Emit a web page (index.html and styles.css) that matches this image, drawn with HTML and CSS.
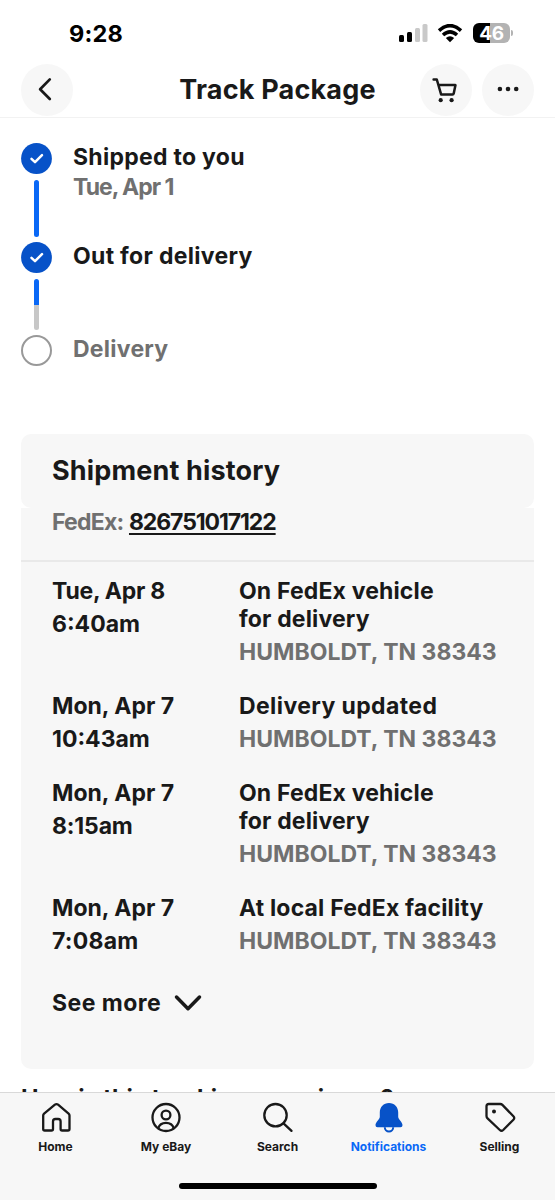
FILE: index.html
```html
<!DOCTYPE html>
<html lang="en">
<head>
<meta charset="utf-8">
<title>Track Package</title>
<link rel="stylesheet" href="styles.css">
</head>
<body>
<div class="screen">
  <div class="status">
    <span class="clock">9:28</span>
    <div class="indicators">
      <svg class="signal" width="29" height="19" viewBox="0 0 29 19">
        <rect x="0" y="11" width="5" height="7" rx="1.5" fill="#000"/>
        <rect x="8" y="8" width="5" height="10" rx="1.5" fill="#000"/>
        <rect x="16" y="4" width="5" height="14" rx="1.5" fill="#c9c9c9"/>
        <rect x="23.5" y="0" width="5" height="18" rx="1.5" fill="#c9c9c9"/>
      </svg>
      <svg class="wifi" width="26" height="19" viewBox="0 0 26 19">
        <path d="M2 6.600Q13-3.400 24 6.600M6 11Q13 4.600 20 11" fill="none" stroke="#000" stroke-width="3.500"/>
        <path d="M8.800 14Q13 10.300 17.200 14L13 18.300Z" fill="#000"/>
      </svg>
      <div class="battery"><span>46</span></div>
      <i class="battery-tip"></i>
    </div>
  </div>

  <header class="header">
    <button class="round" aria-label="Back">
      <svg width="52" height="52" viewBox="0 0 52 52" fill="none" stroke="#191919" stroke-width="2.700" stroke-linecap="round" stroke-linejoin="round"><path d="M28.800 15.400 19.100 25.200l9.700 9.800"/></svg>
    </button>
    <h1>Track Package</h1>
    <div class="actions">
      <button class="round" aria-label="Cart">
        <svg width="52" height="52" viewBox="0 0 52 52" fill="none" stroke="#191919" stroke-width="2.500" stroke-linecap="round" stroke-linejoin="round"><path d="M13.600 15.500h3.200l4.300 14.900h11.400q1 0 1.200-1l1.800-8.300H18.600"/><circle cx="20.700" cy="36.200" r="2.100" fill="#191919" stroke="none"/><circle cx="31.600" cy="36.200" r="2.100" fill="#191919" stroke="none"/></svg>
      </button>
      <button class="round" aria-label="More">
        <svg width="52" height="52" viewBox="0 0 52 52" fill="#191919"><circle cx="17.900" cy="25" r="2.300"/><circle cx="26" cy="25" r="2.300"/><circle cx="34.200" cy="25" r="2.300"/></svg>
      </button>
    </div>
  </header>

  <main class="content">
    <section class="steps">
      <div class="step">
        <div class="rail">
          <svg width="31" height="31" viewBox="0 0 31 31"><circle cx="15.500" cy="15.500" r="15.400" fill="#0752c8"/><path d="m10.500 15.800 3.500 3.300 7-6.900" fill="none" stroke="#fff" stroke-width="2.500" stroke-linecap="round" stroke-linejoin="round"/></svg>
          <i class="bar"></i>
        </div>
        <div class="step-text"><p class="shipped">Shipped to you</p><p class="muted shipdate">Tue, Apr 1</p></div>
      </div>
      <div class="step">
        <div class="rail">
          <svg width="31" height="31" viewBox="0 0 31 31"><circle cx="15.500" cy="15.500" r="15.400" fill="#0752c8"/><path d="m10.500 15.800 3.500 3.300 7-6.900" fill="none" stroke="#fff" stroke-width="2.500" stroke-linecap="round" stroke-linejoin="round"/></svg>
          <i class="bar half"></i>
        </div>
        <div class="step-text"><p class="out">Out for delivery</p></div>
      </div>
      <div class="step">
        <div class="rail"><i class="empty"></i></div>
        <div class="step-text"><p class="muted pending">Delivery</p></div>
      </div>
    </section>

    <section class="history">
      <div class="history-title"><h2>Shipment history</h2></div>
      <div class="history-body">
        <div class="carrier"><span class="muted fedex">FedEx:</span> <a class="number">826751017122</a></div>
        <div class="events">
          <div class="event">
            <div class="when"><p class="tuesday">Tue, Apr 8</p><p>6:40am</p></div>
            <div class="what"><p class="vehicle">On FedEx vehicle<br>for delivery</p><p class="muted place">HUMBOLDT, TN 38343</p></div>
          </div>
          <div class="event">
            <div class="when"><p>Mon, Apr 7</p><p>10:43am</p></div>
            <div class="what"><p class="updated">Delivery updated</p><p class="muted place">HUMBOLDT, TN 38343</p></div>
          </div>
          <div class="event">
            <div class="when"><p>Mon, Apr 7</p><p class="short">8:15am</p></div>
            <div class="what"><p class="vehicle">On FedEx vehicle<br>for delivery</p><p class="muted place">HUMBOLDT, TN 38343</p></div>
          </div>
          <div class="event">
            <div class="when"><p>Mon, Apr 7</p><p class="time">7:08am</p></div>
            <div class="what"><p class="facility">At local FedEx facility</p><p class="muted place">HUMBOLDT, TN 38343</p></div>
          </div>
        </div>
        <div class="more"><span>See more</span>
          <svg width="28" height="18" viewBox="0 0 28 18" fill="none" stroke="#191919" stroke-width="3.500" stroke-linecap="round" stroke-linejoin="round"><path d="m2.500 3 11.500 11.700L25.500 3"/></svg>
        </div>
      </div>
    </section>
    <h2 class="question">How is this tracking experience?</h2>
  </main>

  <nav class="tabs">
    <div class="tab-row">
      <a class="tab"><svg width="32" height="32" viewBox="0 0 32 32" fill="none" stroke="#191919" stroke-width="2.300" stroke-linecap="round" stroke-linejoin="round"><path d="M3.200 27V13.600q0-1.200.9-2L14.900 2.700q1.600-1.200 3.200 0l10.500 8.900q.9.800.9 2V27q0 1.500-1.500 1.500h-5.900q-1.500 0-1.500-1.500v-7.500q0-2.500-2.500-2.500h-2.600q-2.500 0-2.500 2.500V27q0 1.500-1.500 1.500H4.700q-1.500 0-1.500-1.500Z"/></svg><span>Home</span></a>
      <a class="tab"><svg width="32" height="32" viewBox="0 0 32 32" fill="none" stroke="#191919" stroke-width="2.300"><circle cx="16" cy="15.500" r="13.500"/><circle cx="16" cy="13" r="4.400"/><path d="M8.300 26.300c1-3.600 4.200-5.400 7.700-5.400s6.700 1.800 7.700 5.400"/></svg><span>My eBay</span></a>
      <a class="tab"><svg width="32" height="32" viewBox="0 0 32 32" fill="none" stroke="#191919" stroke-width="2.300" stroke-linecap="round"><circle cx="13.500" cy="13.200" r="11.200"/><path d="m21.500 21.300 8 7.600"/></svg><span>Search</span></a>
      <a class="tab active"><svg width="32" height="32" viewBox="0 0 32 32"><path d="M16 1C10.600 1 6.800 5.100 6.800 10.300v4.500c0 2.400-4.300 5.400-4.300 8.500q0 2 2 2h23q2 0 2-2c0-3.100-4.300-6.100-4.300-8.500v-4.500C25.200 5.100 21.400 1 16 1Z" fill="#0752c8"/><path d="M11.800 25.300a4.200 4.200 0 0 0 8.400 0" fill="none" stroke="#0752c8" stroke-width="2"/></svg><span>Notifications</span></a>
      <a class="tab"><svg width="32" height="32" viewBox="0 0 32 32" fill="none" stroke="#191919" stroke-width="2.300" stroke-linejoin="round"><path d="M4.800 2h11.400q1.300 0 2.200.9l11 11.400q1.700 1.700 0 3.400L19.200 28q-1.700 1.600-3.400 0l-12-11.300Q2.500 15.500 2.500 14V4.300Q2.500 2 4.800 2Z"/><circle cx="10" cy="9.400" r="2" fill="#191919" stroke="none"/></svg><span>Selling</span></a>
    </div>
    <i class="home-bar"></i>
  </nav>
</div>
</body>
</html>
```
FILE: styles.css
```css
* { box-sizing: border-box; }
body { margin: 0; background: #fff; font-family: Inter, "Liberation Sans", sans-serif; color: #191919; }
p, h1, h2 { margin: 0; }
svg { display: block; flex: none; }
.screen { width: 555px; height: 1200px; display: flex; flex-direction: column; overflow: hidden; }

.status { height: 64px; flex: none; display: flex; justify-content: space-between; padding: 19px 42px 0 69px; }
.clock { font-size: 23.5px; font-weight: 700; line-height: 29px; letter-spacing: .2px; color: #000; }
.indicators { display: flex; padding-top: 5px; }
.wifi { margin-left: 9px; }
.battery { width: 37px; height: 20px; margin: -1px 0 0 10px; border-radius: 6px; background: linear-gradient(90deg, #000 46%, #b3b3b3 46%); color: #fff; font-size: 19px; font-weight: 700; line-height: 21px; letter-spacing: -.3px; text-align: center; }
.battery-tip { width: 2px; height: 6px; margin: 6px 0 0 1px; border-radius: 0 3px 3px 0; background: #b3b3b3; }

.header { height: 54px; flex: none; display: grid; grid-template-columns: 114px 1fr 114px; padding: 0 21px; border-bottom: 1px solid #f2f2f2; }
.header h1 { padding-top: 9px; text-align: center; font-size: 27px; line-height: 33px; font-weight: 700; letter-spacing: .2px; white-space: nowrap; }
.actions { display: flex; gap: 10px; }
.round { width: 52px; height: 52px; padding: 0; border: 0; border-radius: 50%; background: #f7f7f7; }

.content { flex: 1; min-height: 0; overflow: hidden; padding: 25px 21px 0; font-size: 23px; line-height: 28px; font-weight: 650; }
.muted { color: #707070; }
.steps { height: 291px; }
.step { display: flex; gap: 21px; }
.step:nth-child(1) { height: 99px; }
.step:nth-child(2) { height: 93px; }
.rail { width: 31px; display: flex; flex-direction: column; align-items: center; gap: 6px; }
.bar { width: 5px; height: 57px; border-radius: 3px; background: #0968f6; }
.half { height: 51px; background: linear-gradient(#0968f6 51%, #c7c7c7 51%); }
.empty { width: 31px; height: 31px; border: 2.5px solid #999; border-radius: 50%; }
.step-text { display: flex; flex-direction: column; gap: 2px; }
.shipped { letter-spacing: .28px; }
.shipdate { letter-spacing: -1px; }
.out { letter-spacing: .3px; }
.pending { letter-spacing: .25px; }

.history-title { height: 74px; padding: 20px 31px 0; border-radius: 10px; background: #f7f7f7; }
.history-title h2 { font-size: 27px; line-height: 34px; font-weight: 700; letter-spacing: .15px; }
.history-body { height: 561px; border-radius: 0 0 10px 10px; background: #f7f7f7; }
.carrier { height: 54px; border-bottom: 2px solid #e9e9e9; padding: 0 31px; }
.fedex { letter-spacing: -.75px; }
.number { letter-spacing: -1.1px; text-decoration: underline; text-decoration-thickness: 2px; text-underline-offset: 3px; text-decoration-skip-ink: none; }
.events { display: flex; flex-direction: column; gap: 26px; padding: 15px 31px 0; }
.event { display: grid; grid-template-columns: 187px 1fr; white-space: nowrap; }
.when, .what { display: flex; flex-direction: column; gap: 5px; }
.tuesday { letter-spacing: -.25px; }
.time { letter-spacing: .25px; }
.short { letter-spacing: -.15px; }
.vehicle { letter-spacing: .15px; }
.updated { letter-spacing: .4px; }
.facility { letter-spacing: .18px; }
.more { display: flex; gap: 13px; align-items: center; padding: 34px 31px 0; letter-spacing: .45px; }
.question { margin-top: 15px; font-size: 23.5px; line-height: 28px; font-weight: 700; white-space: nowrap; }

.tabs { height: 108px; flex: none; border-top: 1px solid #d9d9d9; background: #f7f7f7; display: flex; flex-direction: column; align-items: center; }
.tab-row { width: 100%; height: 90px; display: grid; grid-template-columns: repeat(5, 1fr); padding-top: 9px; }
.tab { display: flex; flex-direction: column; align-items: center; gap: 5px; font-size: 12px; line-height: 16px; font-weight: 700; }
.active { color: #0968f6; }
.tab:nth-child(2) { margin-left: -1px; }
.home-bar { width: 198px; height: 6px; border-radius: 3px; background: #000; }
```
